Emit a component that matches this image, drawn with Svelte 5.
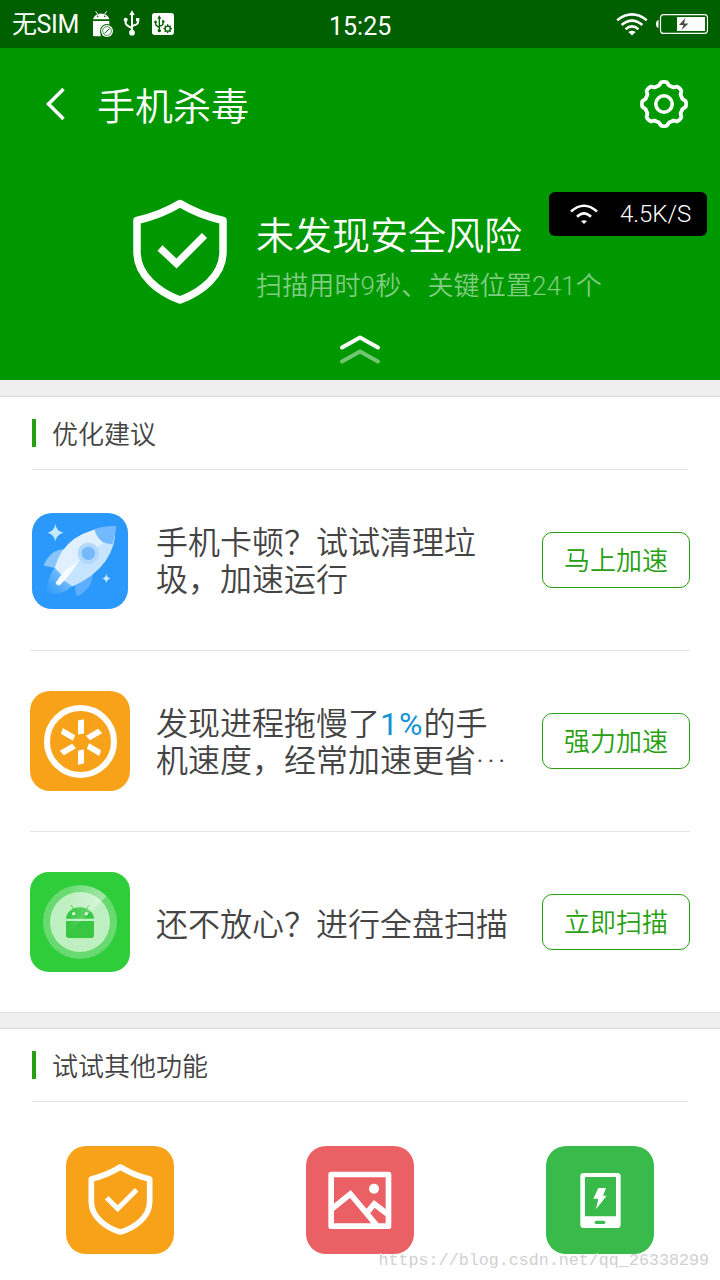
<script>
  export let elapsed = 9;
  export let checked = 241;
  export let speed = "4.5K/S";

  const tips = [
    { icon: "rocket", text: ["手机卡顿？试试清理垃", "圾，加速运行"], action: "马上加速" },
    { icon: "booster", before: "发现进程拖慢了", percent: "1%", after: "的手", text: ["机速度，经常加速更省"], dots: "···", action: "强力加速" },
    { icon: "robot", text: ["还不放心？进行全盘扫描"], action: "立即扫描" }
  ];

  const spokes = [0, 60, 120, 180, 240, 300];

  // outline of the settings gear, eight soft teeth
  function gearPath() {
    const points = [];
    for (let a = 0; a < 360; a += 2.5) {
      const t = (a * Math.PI) / 180;
      const r = 20.5 + 1.6 * Math.tanh(2.2 * Math.cos(8 * t));
      points.push(`${(24 + r * Math.cos(t)).toFixed(2)} ${(24 + r * Math.sin(t)).toFixed(2)}`);
    }
    return "M" + points.join("L") + "Z";
  }
</script>

<div class="screen">
  <div class="top">
    <div class="status">
      <span class="carrier">无SIM</span>
      <svg class="droid" width="22" height="28" viewBox="276 32 66 84">
        <path d="M279 60A25 22 0 0 1 328 60Z" fill="#fff" />
        <path d="M287 36l6 8M320 36l-6 8" stroke="#fff" stroke-width="3" />
        <circle cx="293" cy="51" r="2.5" fill="#006000" />
        <circle cx="314" cy="51" r="2.5" fill="#006000" />
        <path d="M279 65h49v16h-10l-16 16v14h-19q-4 0-4-4z" fill="#fff" />
        <circle cx="321" cy="95" r="21" fill="#006000" />
        <circle cx="321" cy="95" r="18" fill="#fff" />
        <circle cx="321" cy="95" r="13" fill="none" stroke="#006000" stroke-width="2" />
        <path d="M314 102l14-14" stroke="#006000" stroke-width="3" />
      </svg>
      <svg class="usb" width="18" height="28" viewBox="372 32 54 84">
        <path d="M399 98V44M380 62v9q0 7 19 15M417 60v9q0 7-18 11" fill="none" stroke="#fff" stroke-width="6" />
        <path d="M399 33l8 14h-16z" fill="#fff" />
        <circle cx="399" cy="100" r="8.500" fill="#fff" />
        <circle cx="380" cy="61" r="6" fill="#fff" />
        <path d="M411 56h10v10h-10z" fill="#fff" />
      </svg>
      <svg class="usb-box" width="22" height="22" viewBox="456 39 66 66">
        <rect x="456" y="39" width="66" height="66" rx="8" fill="#fff" />
        <g fill="none" stroke="#006000">
          <path d="M478 91V52M467 65v8q0 4 11 9M489 64v7q0 4-11 8" stroke-width="4" />
          <circle cx="503" cy="86" r="7.5" stroke-width="4" />
          <path d="M503 73v5M503 94v5M490 86h5M511 86h5M494 77l3 3M509 92l3 3M494 95l3-3M509 80l3-3" stroke-width="4" />
        </g>
        <path d="M478 46l6 10h-12z" fill="#006000" />
        <circle cx="478" cy="92" r="5" fill="#006000" />
        <path d="M463 62h7v7h-7zM486 61h7v7h-7z" fill="#006000" />
      </svg>
      <span class="clock">15:25</span>
      <svg class="wifi" width="32" height="23" viewBox="0 0 32 23">
        <g fill="none" stroke="#fff" stroke-width="2.6">
          <path d="M1.2 7.2Q16-4.4 30.8 7.2" />
          <path d="M5.6 11.9Q16 3.2 26.4 11.9" />
          <path d="M9.6 16.2Q16 10.6 22.4 16.2" />
        </g>
        <path d="M12.3 18.9Q16 16.4 19.7 18.9L16 22.6z" fill="#fff" />
      </svg>
      <svg class="battery" width="52" height="20" viewBox="0 0 52 20">
        <path d="M2.5 6v8Q0 13.5 0 10t2.500-4z" fill="#fff" />
        <rect x="4.500" y=".6" width="47" height="18.800" rx="3" fill="none" stroke="#fff" stroke-width="1.200" />
        <rect x="21" y="3" width="28" height="14" fill="#fff" />
        <path d="M29.500 4l-6.500 7h4.500l-2 5 7-6.500h-4.500z" fill="#484848" />
      </svg>
    </div>

    <div class="toolbar">
      <svg width="20" height="34" viewBox="0 0 20 34">
        <path d="M17.500 2L2.500 17l15 15" fill="none" stroke="#fff" stroke-width="3.500" />
      </svg>
      <h1>手机杀毒</h1>
      <svg class="gear" width="48" height="48" viewBox="0 0 48 48" fill="none" stroke="#fff">
        <path d={gearPath()} stroke-width="3.800" stroke-linejoin="round" />
        <circle cx="24" cy="24" r="8.200" stroke-width="3.600" />
      </svg>
    </div>

    <div class="result">
      <svg width="94" height="105" viewBox="0 0 94 105" fill="none" stroke="#fff" stroke-width="7.500" stroke-linejoin="round">
        <path d="M47 4.500Q28 16 4 21.500V53C4 76 25 93 47 101C69 93 90 76 90 53V21.500Q66 16 47 4.500Z" />
        <path d="M27 49L43.500 64.500L71.500 36.500" stroke-width="7.300" stroke-linejoin="miter" />
      </svg>
      <div class="words">
        <p class="verdict">未发现安全风险</p>
        <p class="detail">扫描用时{elapsed}秒、关键位置{checked}个</p>
      </div>
    </div>

    <svg class="expand" width="42" height="30" viewBox="0 0 42 30" fill="none" stroke="#fff" stroke-width="4" stroke-linecap="round" stroke-linejoin="round">
      <path d="M3 13.500L21 3.500L39 13.500" />
      <path d="M3 27.500L21 17.500L39 27.500" opacity=".45" />
    </svg>

    <div class="speed">
      <svg width="28" height="20" viewBox="0 0 28 20">
        <path d="M1 7.500Q14-4 27 7.500M7 12.800Q14 6 21 12.800" fill="none" stroke="#fff" stroke-width="2.600" />
        <path d="M11 17Q14 15.300 17 17L14 20z" fill="#fff" />
      </svg>
      <span>{speed}</span>
    </div>
  </div>

  <section>
    <h2><span>优化建议</span></h2>
    <ul>
      {#each tips as tip}
        <li>
          <div class="icon">
            {#if tip.icon === "rocket"}
              <svg width="96" height="96" viewBox="36 39 288 288">
                <defs>
                  <linearGradient id="flame" x1="1" y1="0" x2="0" y2="1">
                    <stop offset="0" stop-color="#a9d5ff" />
                    <stop offset="1" stop-color="#2b99fb" />
                  </linearGradient>
                </defs>
                <rect x="36" y="39" width="288" height="288" rx="60" fill="#2b99fb" />
                <path d="M106 72Q109 93 130 98Q109 104 106 125Q103 104 83 98Q103 93 106 72Z" fill="#c5eaff" />
                <path d="M259 221Q261 233 272 235Q261 238 259 250Q257 238 246 235Q257 233 259 221Z" fill="#c5eaff" />
                <path d="M71 197Q92 143 144 148L106 204Z" fill="#89c5fd" />
                <path d="M217 216Q222 263 172 289Q161 278 168 250Z" fill="#5cafff" />
                <path d="M104 204Q80 232 82 279Q120 291 157 258Z" fill="url(#flame)" opacity=".85" />
                <path d="M104 204Q134 90 286 78Q290 198 158 259Z" fill="#e0f0ff" />
                <path d="M120 235Q200 160 247 132Q267 107 286 78Q290 198 158 259Z" fill="#c6e3ff" />
                <path d="M223 87Q251 78 286 78Q287 106 278 132Q236 135 223 87Z" fill="#73b9ff" />
                <circle cx="205" cy="160" r="32" fill="#b2d8fd" />
                <circle cx="205" cy="160" r="20" fill="#73b9fb" />
                <path d="M177 184Q128 211 108 247Q108 258 120 255Q145 232 177 184Z" fill="#f8fcff" />
              </svg>
            {:else if tip.icon === "booster"}
              <svg width="100" height="100" viewBox="0 0 100 100">
                <rect width="100" height="100" rx="20" fill="#f7a218" />
                <circle cx="50.500" cy="50.500" r="33.500" fill="none" stroke="#fff" stroke-width="6" />
                {#each spokes as angle}
                  <path d="M48 29.500L54 28.200V42.500L48 43.500Z" fill="#fff" transform="rotate({angle} 51 51)" />
                {/each}
              </svg>
            {:else}
              <svg width="100" height="100" viewBox="30 36 300 300">
                <defs>
                  <linearGradient id="sweep" x1="0" y1="0" x2="1" y2="0">
                    <stop offset=".4" stop-color="#fff" stop-opacity="0" />
                    <stop offset="1" stop-color="#fff" stop-opacity=".42" />
                  </linearGradient>
                </defs>
                <rect x="30" y="36" width="300" height="300" rx="56" fill="#30cd3b" />
                <circle cx="180" cy="186" r="111" fill="#68da70" />
                <circle cx="180" cy="186" r="90" fill="#bff0c2" />
                <path d="M138 176A42 34 0 0 1 222 176ZM138 183h84v43q0 8-8 8h-68q-8 0-8-8z" fill="#37c742" />
                <path d="M153 135l9 14M207 135l-9 14" stroke="#37c742" stroke-width="2.500" />
                <circle cx="161" cy="161" r="5" fill="#dbf7dd" />
                <circle cx="199" cy="161" r="5" fill="#dbf7dd" />
                <path d="M146 219L259 109A111 111 0 0 0 69 186Z" fill="url(#sweep)" />
              </svg>
            {/if}
          </div>
          <p class="tip">
            {#if tip.percent}{tip.before}<em>{tip.percent}</em>{tip.after}<br />{/if}
            {#each tip.text as line, i}{#if i > 0}<br />{/if}{line}{/each}{#if tip.dots}<span class="dots">{tip.dots}</span>{/if}
          </p>
          <button>{tip.action}</button>
        </li>
      {/each}
    </ul>
  </section>

  <section class="more">
    <h2><span>试试其他功能</span></h2>
    <div class="features">
      <svg width="108" height="108" viewBox="48 48 324 324">
        <rect x="48" y="48" width="324" height="324" rx="60" fill="#f7a218" />
        <g fill="none" stroke="#fff" stroke-width="17" stroke-linejoin="round">
          <path d="M211 111Q171 136 124 147V216C124 260 168 294 211 306C255 294 299 260 299 216V147Q251 136 211 111Z" />
          <path d="M170 203L203 236L260 179" stroke-width="15" stroke-linejoin="miter" />
        </g>
      </svg>
      <svg width="108" height="108" viewBox="48 48 324 324">
        <rect x="48" y="48" width="324" height="324" rx="60" fill="#ea6065" />
        <g fill="none" stroke="#fff" stroke-width="17">
          <rect x="123.500" y="133.500" width="172" height="155" stroke-linejoin="round" />
          <path d="M127 236L181 192L260 286M234 244L253 222L296 255" />
        </g>
        <circle cx="252" cy="176" r="15" fill="#fff" />
      </svg>
      <svg width="108" height="108" viewBox="528 48 324 324">
        <rect x="528" y="48" width="324" height="324" rx="60" fill="#38bb4b" />
        <path fill-rule="evenodd" d="M641 129h101q10 0 10 10v145q0 10-10 10h-101q-10 0-10-10v-145q0-10 10-10zM645 141v118h93v-118z" fill="#fff" />
        <rect x="674" y="272" width="32" height="10" rx="5" fill="#38bb4b" />
        <path d="M685 174h23l-9 23h11l-32 41 7-32h-15z" fill="#fff" />
      </svg>
    </div>
  </section>
  <span class="mark">https://blog.csdn.net/qq_26338299</span>
</div>

<style>
  :global(body) {
    margin: 0;
  }

  .screen {
    position: relative;
    display: flex;
    flex-direction: column;
    width: 720px;
    height: 1280px;
    overflow: hidden;
    background-color: #efefef;
    font-family: Roboto, "Noto Sans CJK SC", sans-serif;
    font-weight: 350;
    color: #444;
  }

  svg {
    display: block;
    flex: none;
  }

  h1,
  h2,
  p,
  ul {
    margin: 0;
    padding: 0;
    font-weight: 350;
  }

  .top {
    position: relative;
    height: 380px;
    background-color: #009800;
    color: #fff;
  }

  .status {
    display: flex;
    align-items: center;
    height: 48px;
    background-color: #006000;
    font-size: 25px;
    font-weight: 400;
  }

  .carrier {
    width: 80px;
    padding-top: 2px;
    padding-left: 12px;
    letter-spacing: -0.4px;
    line-height: 36px;
    white-space: nowrap;
  }

  .usb {
    margin: 0 11px 0 9px;
  }

  .clock {
    width: 287px;
    margin-left: 155px;
    padding-top: 4px;
  }

  .battery {
    margin-left: 8px;
  }

  .toolbar {
    display: flex;
    align-items: center;
    height: 112px;
    padding: 0 32px 0 46px;
  }

  h1 {
    flex: 1;
    margin-left: 31px;
    padding-top: 5px;
    font-size: 38px;
    line-height: 48px;
  }

  .result {
    display: flex;
    height: 150px;
    padding: 39px 0 0 133px;
    box-sizing: border-box;
  }

  .words {
    margin-left: 29px;
    white-space: nowrap;
  }

  .verdict {
    margin-top: 12px;
    font-size: 38px;
    line-height: 50px;
  }

  .detail {
    margin-top: 6px;
    font-size: 26px;
    line-height: 38px;
    letter-spacing: 0.15px;
    color: #80cc80;
  }

  .expand {
    margin: 24px auto 0;
  }

  .speed {
    position: absolute;
    top: 192px;
    right: 13px;
    display: flex;
    align-items: center;
    gap: 22px;
    width: 158px;
    height: 44px;
    padding-left: 21px;
    box-sizing: border-box;
    border-radius: 6px;
    background-color: #000;
    font-size: 24px;
  }

  section {
    margin-top: 16px;
    border-top: 1px solid #dcdcdc;
    background-color: #fff;
  }

  .more {
    flex: 1;
    margin-top: 15px;
  }

  h2 {
    display: flex;
    align-items: center;
    gap: 16px;
    height: 72px;
    margin: 0 32px;
    border-bottom: 1px solid #e4e4e4;
    font-size: 26px;
  }

  h2::before {
    content: "";
    width: 4px;
    height: 28px;
    background-color: #269f10;
  }

  h2 span {
    padding-bottom: 1px;
  }

  ul {
    list-style: none;
    border-bottom: 1px solid #dcdcdc;
  }

  li {
    display: flex;
    align-items: center;
    height: 180px;
    margin: 0 30px;
    border-bottom: 1px solid #e4e4e4;
  }

  li:last-child {
    border-bottom: 0;
  }

  .icon {
    display: flex;
    justify-content: center;
    width: 100px;
  }

  li:first-child .icon {
    padding-top: 1px;
  }

  .tip {
    flex: 1;
    margin-left: 26px;
    padding-top: 4px;
    font-size: 32px;
    line-height: 37px;
    white-space: nowrap;
  }

  li:last-child .tip {
    padding-top: 6px;
  }

  em {
    font-style: normal;
    font-weight: 400;
    letter-spacing: 1px;
    color: #1593d6;
  }

  .dots {
    letter-spacing: 3px;
  }

  button {
    width: 148px;
    height: 56px;
    padding: 0 0 3px;
    border: 1px solid #269f10;
    border-radius: 10px;
    background-color: #fff;
    color: #269f10;
    font: inherit;
    font-size: 26px;
  }

  .features {
    display: flex;
    justify-content: space-between;
    padding: 44px 66px 0;
  }

  .mark {
    position: absolute;
    right: 11px;
    bottom: 7px;
    font-family: "Liberation Mono", monospace;
    font-size: 16.7px;
    line-height: 24px;
    color: #d0d0d0;
  }
</style>
